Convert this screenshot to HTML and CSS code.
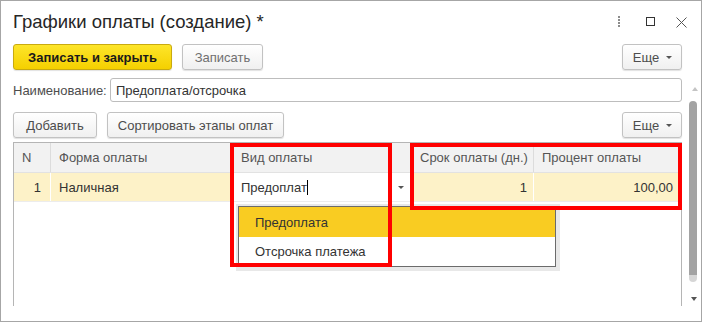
FILE: index.html
```html
<!DOCTYPE html>
<html lang="ru">
<head>
<meta charset="utf-8">
<title>Графики оплаты (создание)</title>
<link rel="stylesheet" href="styles.css">
</head>
<body>
<div class="window">
  <div class="titlebar">
    <h1 class="title">Графики оплаты (создание) *</h1>
    <div class="wintools">
      <span class="dots"><i></i><i></i><i></i><i></i></span>
      <svg class="ico-max" width="9" height="9" viewBox="0 0 9 9"><rect x="0.5" y="0.5" width="8" height="8" fill="none" stroke="#333" stroke-width="1"/></svg>
      <svg class="ico-close" width="11" height="11" viewBox="0 0 11 11"><path d="M0.5 0.5L10.5 10.5M10.5 0.5L0.5 10.5" stroke="#555" stroke-width="1" fill="none"/></svg>
    </div>
  </div>

  <div class="cmdbar top">
    <button class="btn btn-primary">Записать и закрыть</button>
    <button class="btn btn-muted">Записать</button>
    <span class="spacer"></span>
    <button class="btn btn-more">Еще <span class="caret"></span></button>
  </div>

  <div class="body">
    <div class="form">
      <div class="field">
        <label class="label">Наименование:</label>
        <div class="input">Предоплата/отсрочка</div>
      </div>

      <div class="cmdbar inner">
        <button class="btn btn-add">Добавить</button>
        <button class="btn btn-sort">Сортировать этапы оплат</button>
        <span class="spacer"></span>
        <button class="btn btn-more">Еще <span class="caret"></span></button>
      </div>

      <div class="grid">
        <div class="row head">
          <div class="cell c-n">N</div>
          <div class="cell c-form">Форма оплаты</div>
          <div class="cell c-vid">Вид оплаты</div>
          <div class="cell c-term">Срок оплаты (дн.)</div>
          <div class="cell c-pct">Процент оплаты</div>
        </div>
        <div class="row data">
          <div class="cell c-n num">1</div>
          <div class="cell c-form">Наличная</div>
          <div class="cell c-vid edit"><span class="typed">Предоплат</span><span class="cursor"></span><span class="spacer"></span><span class="caret"></span></div>
          <div class="cell c-term num">1</div>
          <div class="cell c-pct num">100,00</div>
        </div>
      </div>
    </div>

    <div class="vscroll">
      <span class="arrow-up"></span>
      <span class="thumb"></span>
      <span class="spacer"></span>
      <span class="arrow-down"></span>
    </div>
  </div>

  <div class="dropdown">
    <div class="option selected">Предоплата</div>
    <div class="option">Отсрочка платежа</div>
  </div>

  <div class="mark mark-vid"></div>
  <div class="mark mark-term"></div>
</div>
</body>
</html>
```

FILE: styles.css
```css
* { box-sizing: border-box; }

html, body {
  margin: 0;
  padding: 0;
  background: #fff;
}

body {
  font-family: "Liberation Sans", Arial, sans-serif;
  font-size: 13px;
  color: #4d4d4d;
}

.window {
  position: relative;
  width: 702px;
  height: 322px;
  border: 1px solid #a6a6a6;
  background: #fff;
  display: flex;
  flex-direction: column;
}

/* title */
.titlebar {
  display: flex;
  align-items: flex-start;
  height: 32px;
  padding: 10px 0 0 12px;
}

.title {
  margin: 0;
  font-size: 18.5px;
  line-height: 22px;
  font-weight: normal;
  color: #262626;
  flex: 1;
}

.wintools {
  display: flex;
  align-items: flex-start;
  padding-top: 5px;
  padding-right: 14px;
}

.dots {
  display: flex;
  flex-direction: column;
  gap: 1px;
  width: 2px;
  margin-right: 26px;
}

.dots i {
  display: block;
  width: 2px;
  height: 2px;
  background: #8c8c8c;
}

.ico-max {
  margin-top: 1px;
  margin-right: 21px;
}

.ico-close {
  margin-top: 1px;
}

/* command bars */
.cmdbar {
  display: flex;
  align-items: flex-start;
  gap: 10px;
}

.cmdbar.top {
  margin-top: 11px;
  padding: 0 19px 0 12px;
}

.cmdbar.inner {
  margin-top: 10px;
}

.spacer { flex: 1; }

.btn {
  height: 26px;
  padding: 0;
  justify-content: center;
  font-family: inherit;
  font-size: 13px;
  color: #4d4d4d;
  background: linear-gradient(#ffffff, #f0f0f0);
  border: 1px solid #c2c2c2;
  border-radius: 3px;
  box-shadow: 0 1px 1px rgba(0,0,0,0.12);
  display: inline-flex;
  align-items: center;
  white-space: nowrap;
}

.btn-primary {
  width: 159px;
  font-weight: bold;
  color: #1a1a1a;
  background: linear-gradient(#fde52a, #f5d000);
  border-color: #c9aa10;
}

.btn-muted {
  width: 81px;
  color: #707070;
}

.btn-add { width: 84px; }

.btn-sort { width: 177px; }

.btn-more {
  width: 60px;
  padding: 0 0 0 1px;
  gap: 7px;
}

.caret {
  display: inline-block;
  width: 0;
  height: 0;
  border-left: 3px solid transparent;
  border-right: 3px solid transparent;
  border-top: 3px solid #555;
}

/* body */
.body {
  display: flex;
  flex: 1;
  padding-top: 4px;
}

.form {
  width: 681px;
  padding-left: 12px;
  display: flex;
  flex-direction: column;
}

.field {
  display: flex;
  align-items: center;
  margin-top: 4px;
  height: 24px;
}

.label {
  width: 97px;
  color: #4d4d4d;
}

.input {
  flex: 1;
  height: 24px;
  border: 1px solid #bdbdbd;
  border-radius: 3px;
  padding: 0 5px;
  display: flex;
  align-items: center;
  color: #333;
}

/* table */
.grid {
  margin-top: 4px;
  height: 164px;
  border: 1px solid #b5b5b5;
  border-bottom: none;
  display: flex;
  flex-direction: column;
}

.row {
  display: grid;
  grid-template-columns: 37px 182px 179px 122px 1fr;
}

.row.head {
  height: 30px;
  background: #f2f2f2;
  border-bottom: 1px solid #e2e2e2;
  color: #555;
}

.row.data {
  height: 29px;
  background: #fdf2c8;
  border-bottom: 1px solid #ececec;
  color: #333;
}

.cell {
  display: flex;
  align-items: center;
  padding: 0 8px;
  white-space: nowrap;
  border-right: 1px solid #dcdcdc;
}

.row.data .cell { border-right-color: #fff; }

.cell.c-pct { border-right: none; }

.cell.num { justify-content: flex-end; }

.row.data .c-n { padding-right: 9px; }
.row.data .c-term { padding-right: 6px; }

.cell.edit {
  background: #fff;
  padding-right: 7px;
}

.cursor {
  display: inline-block;
  width: 1px;
  height: 15px;
  background: #000;
}

/* scrollbar */
.vscroll {
  flex: 1;
  display: flex;
  flex-direction: column;
  align-items: flex-start;
  padding: 13px 0 20px 7px;
}

.arrow-up {
  margin-left: 3px;
  width: 0;
  height: 0;
  border-left: 3px solid transparent;
  border-right: 3px solid transparent;
  border-bottom: 4px solid #c4c4c4;
}

.thumb {
  margin-top: 10px;
  width: 8px;
  height: 181px;
  border-radius: 4px;
  background: linear-gradient(#a3a3a3 0, #a3a3a3 174px, #d6d6d6 174px);
}

.arrow-down {
  margin-left: 2px;
  width: 0;
  height: 0;
  border-left: 3.5px solid transparent;
  border-right: 3.5px solid transparent;
  border-top: 4px solid #555;
}

/* dropdown overlay */
.dropdown {
  position: absolute;
  left: 237px;
  top: 205px;
  width: 318px;
  height: 61px;
  border: 1px solid #6b6b6b;
  background: #fff;
  box-shadow: 1px 1px 0 3px rgba(0,0,0,0.09);
  color: #333;
}

.option {
  height: 30px;
  padding-left: 16px;
  display: flex;
  align-items: center;
}

.option + .option { height: 29px; }

.option.selected { background: #f9cc22; }

/* red highlight marks */
.mark {
  position: absolute;
  border: 4px solid #ff0000;
}

.mark-vid {
  left: 229px;
  top: 142px;
  width: 162px;
  height: 124px;
}

.mark-term {
  left: 409px;
  top: 142px;
  width: 272px;
  height: 67px;
}
```
